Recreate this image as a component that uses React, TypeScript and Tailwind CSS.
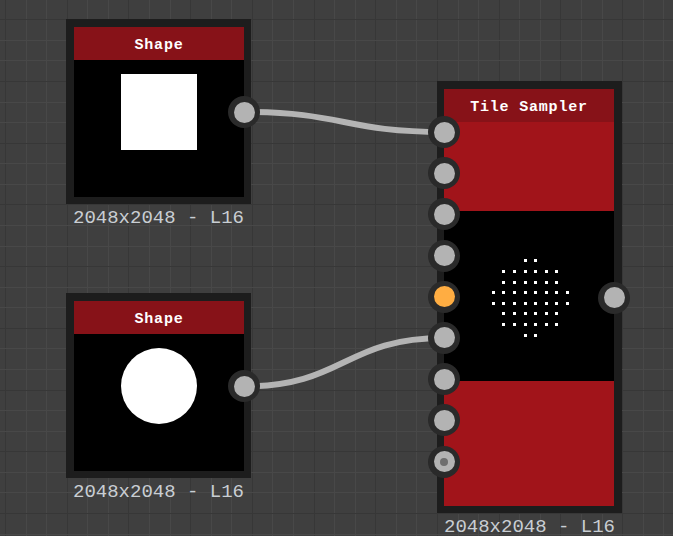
import type { ReactNode } from "react";

const W = 673;
const H = 536;
const CELL = 20.57;

// grid lines, every third one is a major (darker) line
const gridX = Array.from({ length: 34 }, (_, i) => ({ pos: 5 + (i - 1) * CELL, major: (i - 1) % 3 === 0 }));
const gridY = Array.from({ length: 28 }, (_, i) => ({ pos: 19.3 + (i - 1) * CELL, major: (i - 1) % 3 === 0 }));

const dotRows: number[][] = [
  [3, 4],
  [1, 2, 3, 4, 5, 6],
  [1, 2, 3, 4, 5, 6],
  [0, 1, 2, 3, 4, 5, 6, 7],
  [0, 1, 2, 3, 4, 5, 6, 7],
  [1, 2, 3, 4, 5, 6],
  [1, 2, 3, 4, 5, 6],
  [3, 4],
];

const Port = ({ color = "bg-[#b3b3b3]", dot = false }: { color?: string; dot?: boolean }) => (
  <div className="w-8 h-8 rounded-full bg-[#2a2a2a] flex items-center justify-center">
    <div className={`w-[21px] h-[21px] rounded-full ${color} flex items-center justify-center`}>
      {dot && <div className="w-[8px] h-[8px] rounded-full bg-[#6e6e6e]" />}
    </div>
  </div>
);

const Header = ({ title }: { title: string }) => (
  <div className="h-[33px] pt-[6px] bg-[#871218] flex items-center justify-center text-white font-bold text-[15px] tracking-[0.8px] font-['Liberation_Mono',monospace]">
    {title}
  </div>
);

type NodeProps = {
  left: number;
  top: number;
  pad: string;
  children: ReactNode;
};

const Node = ({ left, top, pad, children }: NodeProps) => (
  <div className="absolute flex flex-col items-center" style={{ left, top }}>
    <div className={`bg-[#1d1d1d] ${pad}`}>{children}</div>
    <div className="mt-[4px] leading-[20px] text-[19px] text-[#c9ced3] font-['Liberation_Mono',monospace] whitespace-pre">
      2048x2048 - L16
    </div>
  </div>
);

const ShapeNode = ({ left, top, round }: { left: number; top: number; round?: boolean }) => (
  <Node left={left} top={top} pad="pl-2 pr-[7px] pt-2 pb-[7px]">
    <div className="relative w-[170px] h-[170px] bg-black flex items-center justify-center">
      <div className="absolute top-0 inset-x-0">
        <Header title="Shape" />
      </div>
      <div className={`w-[76px] h-[76px] bg-white ${round ? "rounded-full" : ""}`} />
      <div className="absolute right-[-16px] top-1/2 -translate-y-1/2">
        <Port />
      </div>
    </div>
  </Node>
);

const TileSampler = () => (
  <Node left={437} top={81} pad="pl-[7px] pr-2 pt-2 pb-[7px]">
    <div className="relative w-[170px] h-[417px] flex flex-col bg-[#a1141a]">
      <Header title="Tile Sampler" />
      <div className="h-[89px]" />
      <div className="h-[170px] bg-black">
        <svg width={170} height={170} shapeRendering="crispEdges">
          {dotRows.map((cols, r) =>
            cols.map((c) => (
              <rect key={`${r}-${c}`} x={47.8 + c * 10.6} y={48.3 + r * 10.6} width={3} height={3} fill="#fff" />
            ))
          )}
        </svg>
      </div>
      <div className="flex-1" />

      <div className="absolute left-[-16px] top-[27px] flex flex-col gap-[9.2px]">
        <Port />
        <Port />
        <Port />
        <Port />
        <Port color="bg-[#ffad42]" />
        <Port />
        <Port />
        <Port />
        <Port dot />
      </div>
      <div className="absolute right-[-16px] top-1/2 -translate-y-1/2">
        <Port />
      </div>
    </div>
  </Node>
);

export default function App() {
  return (
    <div className="relative w-[673px] h-[536px] overflow-hidden bg-[#3f3f3f]">
      <svg className="absolute inset-0" width={W} height={H}>
        <g shapeRendering="crispEdges">
          {gridX.map((l, i) => (
            <line key={`x${i}`} x1={Math.round(l.pos) + 0.5} y1={0} x2={Math.round(l.pos) + 0.5} y2={H} stroke={l.major ? "#373737" : "#484848"} strokeWidth={1} />
          ))}
          {gridY.map((l, i) => (
            <line key={`y${i}`} x1={0} y1={Math.round(l.pos) + 0.5} x2={W} y2={Math.round(l.pos) + 0.5} stroke={l.major ? "#373737" : "#484848"} strokeWidth={1} />
          ))}
        </g>
        <path d="M244 112 C344 112 344 132 444 132" stroke="#b4b4b4" strokeWidth={6} fill="none" />
        <path d="M244 386.5 C344 386.5 344 338 444 338" stroke="#b4b4b4" strokeWidth={6} fill="none" />
      </svg>

      <ShapeNode left={66} top={19} />
      <ShapeNode left={66} top={293} round />
      <TileSampler />
    </div>
  );
}
